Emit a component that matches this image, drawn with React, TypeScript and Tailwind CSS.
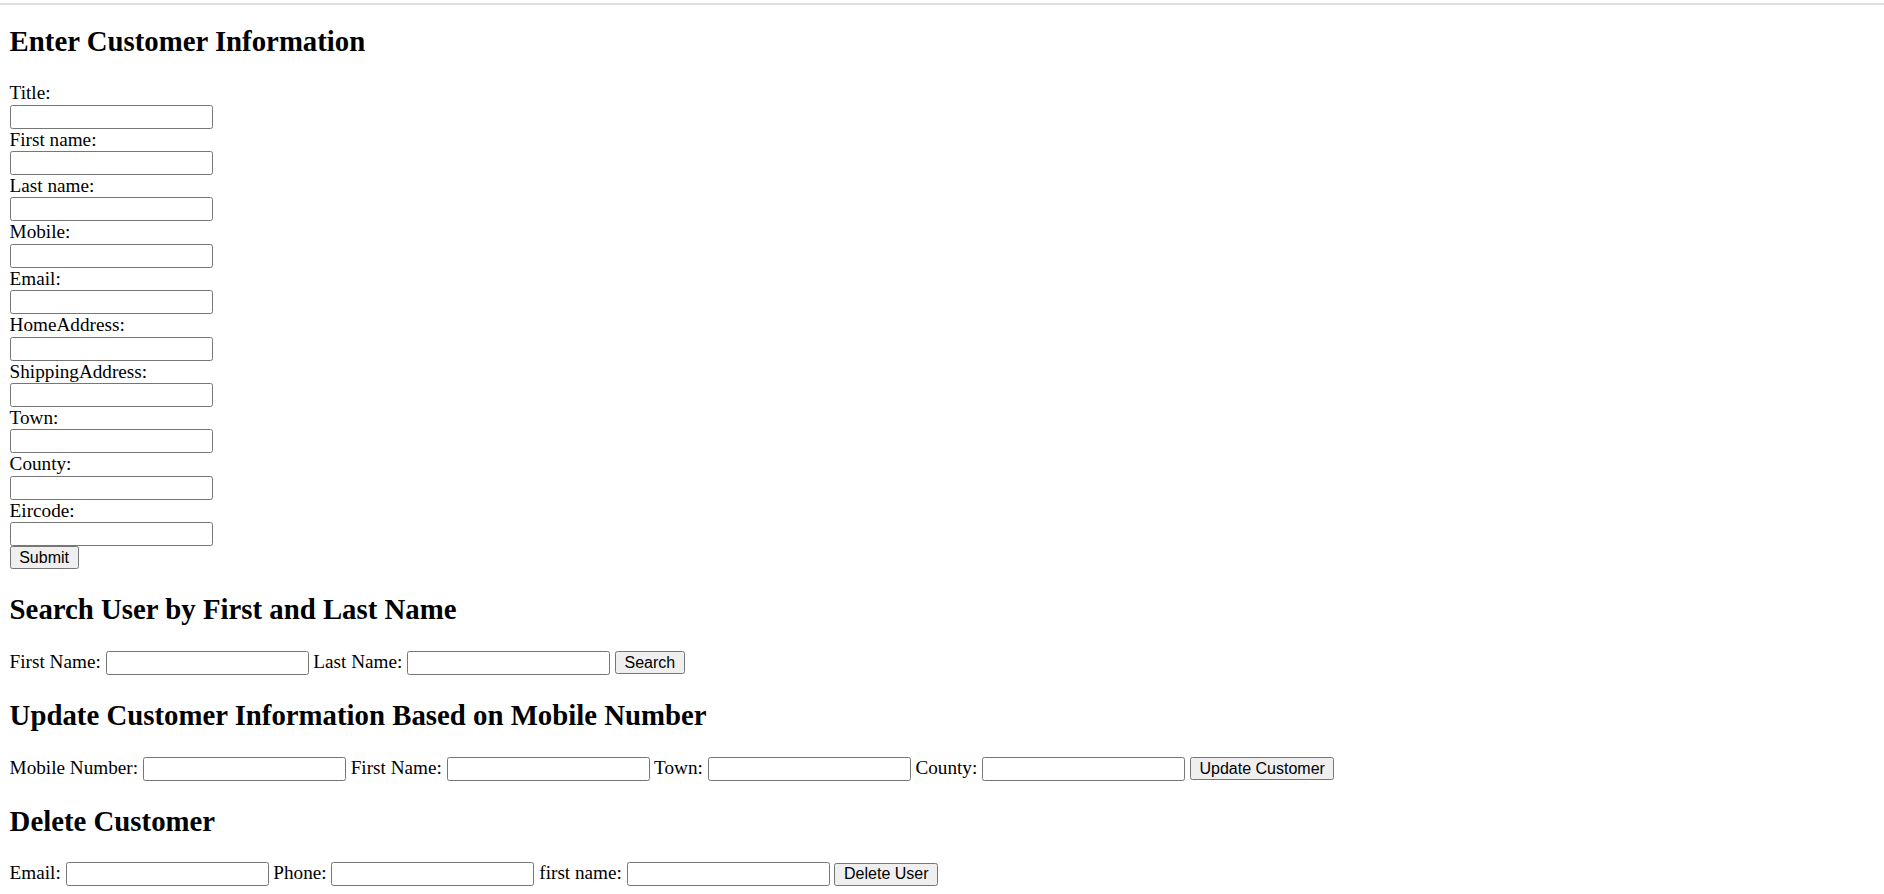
const inputCls =
  "w-[203px] h-[24px] border border-[#767676] rounded-[2.4px] bg-white px-[2.4px] align-baseline font-['Liberation_Sans',sans-serif] text-[16px] leading-[normal]";
const buttonCls =
  "h-[23px] px-[8.6px] border border-[#767676] rounded-[2.4px] bg-[#efefef] align-baseline font-['Liberation_Sans',sans-serif] text-[16px] leading-[normal] text-black";
const headingCls = "text-[28.8px] font-bold leading-[normal] my-[23.9px]";

const customerFields = [
  "Title",
  "First name",
  "Last name",
  "Mobile",
  "Email",
  "HomeAddress",
  "ShippingAddress",
  "Town",
  "County",
  "Eircode",
];

function Row({ labels, action }: { labels: string[]; action: string }) {
  return (
    <div className="leading-[24.4px]">
      {labels.map((l) => (
        <span key={l}>
          <label>{l}:</label> <input type="text" className={inputCls} />{" "}
        </span>
      ))}
      <button type="button" className={buttonCls}>
        {action}
      </button>
    </div>
  );
}

export default function App() {
  return (
    <div className="min-h-screen bg-white text-black font-['Liberation_Serif',serif] text-[19.2px] leading-[normal] pt-[3px]">
      <div className="h-[2px] bg-[#e0e0e0]" />
      <div className="px-[9.6px]">
        {/* Create */}
        <h2 className="text-[28.8px] font-bold leading-[normal] mt-[20.3px] mb-[23.9px]">
          Enter Customer Information
        </h2>
        <form onSubmit={(e) => e.preventDefault()}>
          {customerFields.map((f) => (
            <div key={f}>
              <label className="block h-[22.4px] leading-[22.4px]">{f}:</label>
              <input type="text" className={inputCls + " block"} />
            </div>
          ))}
          <button type="submit" className={buttonCls + " block"}>
            Submit
          </button>
        </form>

        {/* Search */}
        <h2 className={headingCls}>Search User by First and Last Name</h2>
        <Row labels={["First Name", "Last Name"]} action="Search" />

        {/* Update */}
        <h2 className={headingCls}>Update Customer Information Based on Mobile Number</h2>
        <Row
          labels={["Mobile Number", "First Name", "Town", "County"]}
          action="Update Customer"
        />

        {/* Delete */}
        <h2 className={headingCls}>Delete Customer</h2>
        <Row labels={["Email", "Phone", "first name"]} action="Delete User" />
      </div>
    </div>
  );
}
